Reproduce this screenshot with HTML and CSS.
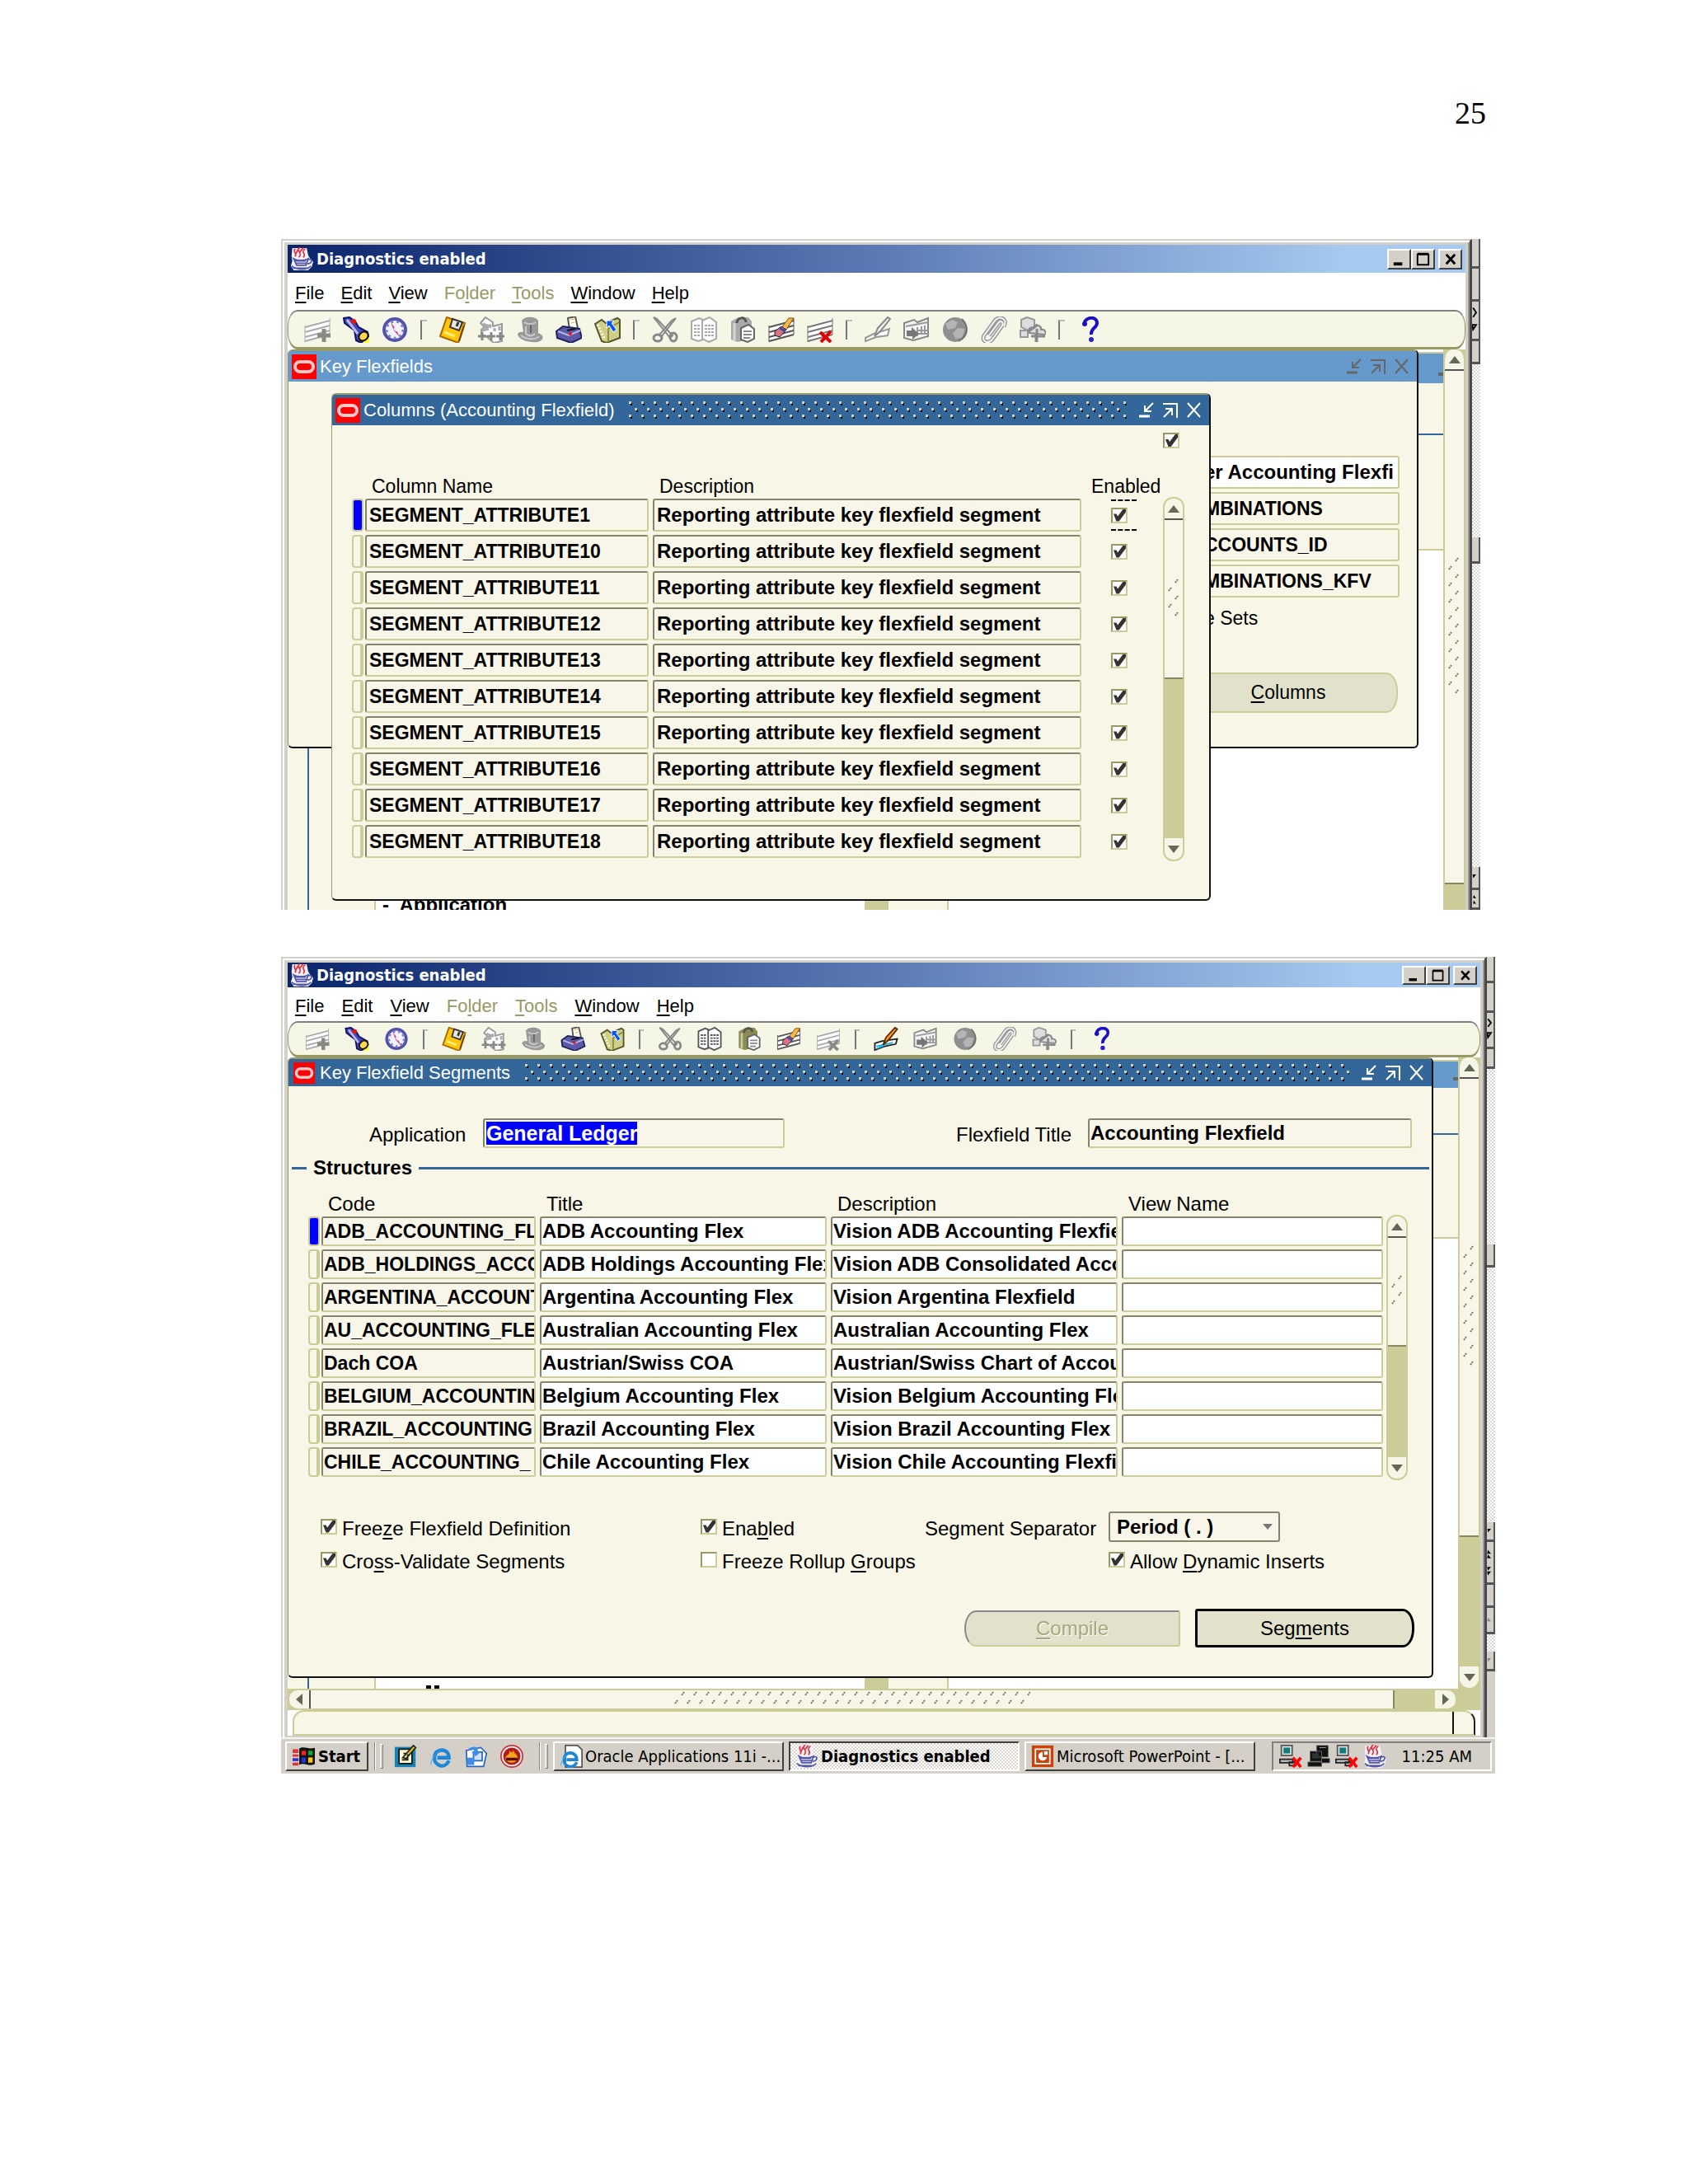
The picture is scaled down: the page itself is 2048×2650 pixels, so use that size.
FILE: index.html
```html
<!DOCTYPE html>
<html lang="en">
<head>
<meta charset="utf-8">
<title>Key Flexfields</title>
<link rel="stylesheet" href="styles.css">
</head>
<body>
<svg class="defs" aria-hidden="true">
  <defs>
    <pattern id="hatch" width="15" height="16" patternUnits="userSpaceOnUse">
      <path d="M3 2h2v3h-2zM10 10h2v3h-2z" fill="#000"/>
      <path d="M1 0h3v3h-3zM8 8h3v3h-3z" fill="#d2d2b4"/>
    </pattern>
    <pattern id="grip" width="15" height="20" patternUnits="userSpaceOnUse">
      <path d="M9 5l3-4M1 15l3-4" stroke="#77775a" stroke-width="2" stroke-dasharray="2 1"/>
    </pattern>
    <symbol id="rows" viewBox="0 0 32 32"><path d="M1 12l30-10v18L1 30z" fill="#fff"/><path d="M1 13l30-8M1 19l30-8M1 25l30-8M1 30l30-8" stroke="currentColor" stroke-width="2"/><path d="M1 11v20M31 2v20" stroke="currentColor"/></symbol>
    <symbol id="i-add" viewBox="0 0 32 32"><use href="#rows"/><path d="M24 15v16M16 23h16" stroke="#8a8a84" stroke-width="5"/></symbol>
    <symbol id="i-torch" viewBox="0 0 32 32"><path d="M22 32l10-12v12z" fill="#ff3"/><path d="M1 2l7-1 7 5 4 7 11 6 1 5-9 8-6-3-2-12L2 8z" fill="#4747b5" stroke="#116" stroke-width="2"/><path d="M5 4l13 17" stroke="#b9b9f2" stroke-width="3"/><circle cx="13" cy="6" r="3" fill="#e11"/><ellipse cx="25" cy="24" rx="6" ry="5" transform="rotate(-40 25 24)" fill="#ffd750" stroke="#111" stroke-width="2"/></symbol>
    <symbol id="i-compass" viewBox="0 0 32 32"><circle cx="16" cy="16" r="13" fill="#f2f2ff" stroke="#5252aa" stroke-width="4"/><circle cx="16" cy="16" r="10" fill="none" stroke="#8080c8" stroke-width="3" stroke-dasharray="3 4"/><path d="M11 7l6 8 5 10-7-8z" fill="#d12a6d"/><path d="M15 14l3 4" stroke="#fff" stroke-width="2"/></symbol>
    <symbol id="i-save" viewBox="0 0 32 32"><path d="M9 1l22 7-8 24L1 24z" fill="#ffc60a" stroke="#a46a00" stroke-width="2"/><path d="M16 3l12 4-4 10-11-4z" fill="#e8e8df" stroke="#333" stroke-width="2"/><path d="M23 7l-2 5" stroke="#333" stroke-width="3"/><path d="M24 30l6-19" stroke="#7a3b00" stroke-width="2"/><path d="M6 19l13 5" stroke="#fff07a" stroke-width="3"/></symbol>
    <symbol id="i-steps" viewBox="0 0 32 32"><path d="M9 1l9 6v5l11-3v21l-10 2-9-8-6-2v-6l4-3-5-5z" fill="#fff" stroke="#999" stroke-width="2"/><path d="M6 9l10 4M8 14l8-4M20 14v4M26 12v5M5 17l8-2" stroke="#aaa" stroke-width="3"/><path d="M0 24h10M11 24h10M22 24h10M5 19v10M16 19v10M27 19v10" stroke="#888" stroke-width="3"/></symbol>
    <symbol id="i-hat" viewBox="0 0 32 32"><path d="M6 5c3-5 16-6 20 0v15c8 3 7 9-1 11-9 1-22-2-24-9 0-3 4-4 7-3z" fill="#999"/><path d="M9 7c4 3 10 3 14 0M5 23c6 5 18 6 22 1M11 12v9c4 3 8 3 11 0" stroke="#c9c9c9" stroke-width="2" fill="none"/><path d="M17 10v10" stroke="#666" stroke-width="2"/></symbol>
    <symbol id="i-print" viewBox="0 0 32 32"><path d="M15 2l9-2 3 14-10 2z" fill="#fff" stroke="#555" stroke-width="2"/><path d="M1 18l8-6 20 3 3 11-13 6-17-6z" fill="#5a5aa8" stroke="#22225a" stroke-width="2"/><path d="M3 18l13 5 14-6" stroke="#b6b6e8" stroke-width="2" fill="none"/><path d="M14 17l10-2" stroke="#111" stroke-width="2"/><circle cx="18" cy="21" r="2" fill="#e11"/><path d="M18 4l5-1M19 8l4-1" stroke="#ea0"/></symbol>
    <symbol id="i-folder" viewBox="0 0 32 32"><path d="M1 9l8-5 5 4 14-6 3 2v22L15 32 9 30z" fill="#cfcf86" stroke="#55552a" stroke-width="2"/><path d="M17 31V15l13-8" fill="none" stroke="#8b8b45" stroke-width="2"/><path d="M4 10l9 18" stroke="#fffff0" stroke-width="3" stroke-dasharray="2 2"/><path d="M15 5h9l-3 3 6 8-4 3-5-8-3 3z" fill="#05f" stroke="#fff"/></symbol>
    <symbol id="i-cut" viewBox="0 0 32 32"><path d="M2 1l4 2 19 20-3 3zM29 2l-5 3L9 22l2 3z" fill="#eee" stroke="#888" stroke-width="2"/><ellipse cx="26" cy="25" rx="4" ry="5" fill="none" stroke="#888" stroke-width="3"/><ellipse cx="7" cy="26" rx="5" ry="4" fill="none" stroke="#888" stroke-width="3"/></symbol>
    <symbol id="i-copy" viewBox="0 0 32 32"><path d="M1 6l9-4 8 3v22L9 30l-8-3z" fill="#fff" stroke="currentColor" stroke-width="2"/><path d="M14 5l9-4 8 6v20l-9 4-8-4z" fill="#fff" stroke="currentColor" stroke-width="2"/><path d="M17 11h11M17 15h11M17 19h11M17 23h11M4 11h7M4 15h7M4 19h7M4 23h7" stroke="currentColor" stroke-width="2" stroke-dasharray="3 1"/></symbol>
    <symbol id="i-paste" viewBox="0 0 32 32"><path d="M2 6l9-5h12l4 5v21L10 31l-8-3z" fill="currentColor"/><path d="M6 8v21" stroke="#fff" stroke-opacity=".5" stroke-width="3"/><path d="M9 8c0-7 11-9 11-1" fill="none" stroke="#555" stroke-width="3"/><path d="M14 14l9-4 7 5v12l-8 4-8-3z" fill="#fff" stroke="#666" stroke-width="2"/><path d="M17 18h10M17 22h10M17 26h8" stroke="#888" stroke-width="2"/></symbol>
    <symbol id="i-clear" viewBox="0 0 32 32"><use href="#rows"/><path d="M15 15L25 2h6l-9 14z" fill="#f2b84b" stroke="#854700"/><path d="M8 18l8-6 6 4-8 9-6-2z" fill="#d77383" stroke="#222"/><path d="M14 14l7 4" stroke="#44a" stroke-width="3"/></symbol>
    <symbol id="i-delete" viewBox="0 0 32 32"><use href="#rows" color="#777"/><path d="M16 19l13 12M29 18L17 31" stroke="#e00000" stroke-width="4"/></symbol>
    <symbol id="i-delete-off" viewBox="0 0 32 32"><use href="#rows" color="#aaa"/><path d="M16 19l13 12M29 18L17 31" stroke="#888" stroke-width="4"/></symbol>
    <symbol id="i-edit-off" viewBox="0 0 32 32"><path d="M1 26l10-5 19-6-2 8-14 2L1 30z" fill="#fff" stroke="#999" stroke-width="2"/><path d="M12 24l4-10L28 1l3 2-12 15z" fill="#eee" stroke="#888" stroke-width="2"/></symbol>
    <symbol id="i-edit" viewBox="0 0 32 32"><path d="M1 22l10-3 20-3-2 7-15 3L1 31z" fill="#fff" stroke="#222" stroke-width="2"/><path d="M3 26l22-5M4 29l9-4" stroke="#18aee0" stroke-width="2"/><path d="M12 24l4-10L28 1l3 2-12 15z" fill="#ff9a22" stroke="#5a2b00" stroke-width="2"/></symbol>
    <symbol id="i-trans" viewBox="0 0 32 32"><path d="M1 8l12-4 4 3 13-5v22l-18 5-11-3z" fill="#f4f4f4" stroke="#888" stroke-width="2"/><path d="M3 12l27-5M17 13v11M22 12v10M26 11v10M16 17h14M16 21h14" stroke="#999" stroke-width="2"/><path d="M4 17h6v-4l9 8-8 7v-4H4z" fill="#777"/></symbol>
    <symbol id="i-globe" viewBox="0 0 32 32"><circle cx="16" cy="16" r="15" fill="#8f8f8f"/><path d="M4 9l8-5 7 3-3 7-9 2zM19 14l9 1-4 11-8 1-3-7z" fill="#b4b4b4"/><path d="M24 3c8 8 8 20-4 27" stroke="#737373" stroke-width="2" fill="none"/></symbol>
    <symbol id="i-clip" viewBox="0 0 32 32"><path d="M10 23L21 8c3-4 7-1 5 3L14 28c-5 6-14 2-10-5L17 5c6-7 16-2 11 7" fill="none" stroke="#999" stroke-width="5"/><path d="M10 23L21 8c3-4 7-1 5 3L14 28c-5 6-14 2-10-5L17 5c6-7 16-2 11 7" fill="none" stroke="#f4f4f4" stroke-width="2"/></symbol>
    <symbol id="i-tree" viewBox="0 0 32 32"><path d="M2 4l7-3 9 3v9l-8 4-8-4zM1 17h9v8H1z" fill="#ddd" stroke="#999" stroke-width="2"/><path d="M12 20c-4-4 2-8 5-6 2-6 10-3 9 2 6-1 7 5 4 6l-9-1z" fill="#ddd" stroke="#888" stroke-width="2"/><path d="M11 18l11-8M21 15v16M14 24h17M20 20v11" stroke="#888" stroke-width="3"/></symbol>
    <symbol id="i-help" viewBox="0 0 32 32"><path d="M9 10C7 1 24-2 24 8c0 6-8 6-7 14" fill="none" stroke="#1b10c4" stroke-width="4"/><circle cx="9" cy="9" r="3" fill="#1b10c4"/><circle cx="17" cy="28" r="3" fill="#2a20d4"/></symbol>
    <symbol id="java" viewBox="0 0 32 32"><path d="M3 1h20l2 10 3 5 4 4-2 7-5 5H5l-4-6 2-7-1-7z" fill="#f2f2fb"/><path d="M14 0c-8 6 5 6-2 14M21 2c-8 5 3 7-3 12M7 2c-4 4 3 6 0 11M11 3l-4 8M18 1l-5 6" fill="none" stroke="#e3323e" stroke-width="2"/><path d="M5 16c5 3 14 3 20 0l-3 9H9zM25 17c7-2 6 5-1 6M2 26c8 6 21 6 27 0M6 19h16M8 22h14M4 29h22" fill="none" stroke="#5257a8" stroke-width="2"/></symbol>
    <symbol id="oracle" viewBox="0 0 30 30"><path d="M0 0h30v30H0z" fill="#f00"/><rect x="4" y="9" width="22" height="12" rx="6" fill="none" stroke="#ffc9c9" stroke-width="4"/></symbol>
    <symbol id="w-min" viewBox="0 0 20 20"><path d="M1 17h13" stroke="currentColor" stroke-width="3"/><path d="M18 1l-9 9M8 4v7h8" fill="none" stroke="currentColor" stroke-width="2"/></symbol>
    <symbol id="w-max" viewBox="0 0 20 20"><path d="M1 2h17v17" fill="none" stroke="currentColor" stroke-width="2"/><path d="M2 18l9-9M4 8h8v8" fill="none" stroke="currentColor" stroke-width="2"/></symbol>
    <symbol id="w-close" viewBox="0 0 20 20"><path d="M2 1l15 17M17 1L2 18" stroke="currentColor" stroke-width="2"/></symbol>
    <symbol id="netpc" viewBox="0 0 32 32"><path d="M3 1h15v14H3z" fill="#ddd" stroke="#555" stroke-width="2"/><path d="M6 4h9v8H6z" fill="#087f7c"/><path d="M1 20h18v5H1zM14 24h9v5h-9z" fill="#bbb" stroke="#222" stroke-width="2"/></symbol>
    <symbol id="netoff" viewBox="0 0 32 32"><use href="#netpc"/><path d="M19 18l11 13M30 18L19 31" stroke="#f00" stroke-width="4"/></symbol>
    <symbol id="netdark" viewBox="0 0 32 32"><path d="M13 1h16v16H13zM4 9h16v14H4zM1 24h19v6H1zM20 19h11v6H20z" fill="#111" stroke="#666"/><path d="M7 12h9v7H7z" fill="#333"/><path d="M17 4h9" stroke="#aaa"/></symbol>
    <symbol id="ie" viewBox="0 0 32 32"><path d="M27 22c-5 12-21 8-20-5C8 4 27 4 27 18H11" fill="none" stroke="#1c86d8" stroke-width="5"/><path d="M2 29C-2 20 18 1 30 3c-9-1-21 8-26 18z" fill="#4fb6f2"/></symbol>
  </defs>
</svg>

<main class="page">
  <p class="page-number">25</p>

  <section class="shot shot-one">
    <div class="frame">
      <header class="app-title">
        <svg class="java"><use href="#java"/></svg><span>Diagnostics enabled</span>
        <button aria-label="Minimize"><svg viewBox="0 0 24 22"><path d="M5 17h11" stroke="#000" stroke-width="4"/></svg></button><button aria-label="Maximize"><svg viewBox="0 0 24 22"><path d="M5 5h14v13H5zM5 4h14" fill="none" stroke="#000" stroke-width="2"/></svg></button><button class="apart" aria-label="Close"><svg viewBox="0 0 24 22"><path d="M7 5l11 12M18 5L7 17" stroke="#000" stroke-width="3"/></svg></button>
      </header>
      <nav class="menu">
        <a href="#"><u>F</u>ile</a><a href="#"><u>E</u>dit</a><a href="#"><u>V</u>iew</a><a href="#" class="off">Fo<u>l</u>der</a><a href="#" class="off"><u>T</u>ools</a><a href="#"><u>W</u>indow</a><a href="#"><u>H</u>elp</a>
      </nav>
      <div class="toolbar">
        <svg class="faint"><use href="#i-add"/></svg><svg><use href="#i-torch"/></svg><svg><use href="#i-compass"/></svg><i></i>
        <svg><use href="#i-save"/></svg><svg><use href="#i-steps"/></svg><svg><use href="#i-hat"/></svg><svg><use href="#i-print"/></svg><svg><use href="#i-folder"/></svg><i></i>
        <svg><use href="#i-cut"/></svg><svg class="faint"><use href="#i-copy"/></svg><svg class="faint"><use href="#i-paste"/></svg><svg class="dark"><use href="#i-clear"/></svg><svg><use href="#i-delete"/></svg><i></i>
        <svg><use href="#i-edit-off"/></svg><svg><use href="#i-trans"/></svg><svg><use href="#i-globe"/></svg><svg><use href="#i-clip"/></svg><svg><use href="#i-tree"/></svg><i></i>
        <svg><use href="#i-help"/></svg>
      </div>
      <div class="workspace">
        <div class="desktop">
          <div class="behind">
            <div class="behind-title"><i></i></div>
            <div class="behind-form"></div>
            <div class="behind-list"><div class="tree-edge"></div><div class="tree"><b>-&nbsp; Application</b></div><div class="tree-scroll"></div><div class="tree-gap"></div></div>
          </div>
          <section class="window key-window">
            <header class="bar idle"><svg class="logo"><use href="#oracle"/></svg><h2>Key Flexfields</h2><span class="controls"><svg><use href="#w-min"/></svg><svg><use href="#w-max"/></svg><svg><use href="#w-close"/></svg></span></header>
            <div class="key-form">
              <input class="field editable" aria-label="Title" value="er Accounting Flexfi">
              <input class="field caps" aria-label="Table" value="MBINATIONS" readonly>
              <input class="field caps" aria-label="Identifier" value="CCOUNTS_ID" readonly>
              <input class="field caps" aria-label="View" value="MBINATIONS_KFV" readonly>
              <span class="sets">e Sets</span>
              <button class="push"><span><u>C</u>olumns</span></button>
            </div>
          </section>
          <section class="window columns-window">
            <header class="bar"><svg class="logo"><use href="#oracle"/></svg><h2>Columns (Accounting Flexfield)</h2><svg class="hatch"><rect width="100%" height="100%" fill="url(#hatch)"/></svg><span class="controls"><svg><use href="#w-min"/></svg><svg><use href="#w-max"/></svg><svg><use href="#w-close"/></svg></span></header>
            <div class="folder-check"><input type="checkbox" aria-label="Folder" checked></div>
            <div class="block">
              <table class="grid grid-columns">
                <colgroup><col class="c-mark"><col class="c-name"><col class="c-desc"><col></colgroup>
                <thead><tr><th></th><th>Column Name</th><th>Description</th><th class="th-enabled">Enabled</th></tr></thead>
                <tbody>
                  <tr class="current"><td><i></i></td><td><input class="field caps" aria-label="Column Name" value="SEGMENT_ATTRIBUTE1" readonly></td><td><input class="field" aria-label="Description" value="Reporting attribute key flexfield segment" readonly></td><td class="tick"><span class="focus"><input type="checkbox" aria-label="Enabled" checked></span></td></tr>
                  <tr><td><i></i></td><td><input class="field caps" aria-label="Column Name" value="SEGMENT_ATTRIBUTE10" readonly></td><td><input class="field" aria-label="Description" value="Reporting attribute key flexfield segment" readonly></td><td class="tick"><input type="checkbox" aria-label="Enabled" checked></td></tr>
                  <tr><td><i></i></td><td><input class="field caps" aria-label="Column Name" value="SEGMENT_ATTRIBUTE11" readonly></td><td><input class="field" aria-label="Description" value="Reporting attribute key flexfield segment" readonly></td><td class="tick"><input type="checkbox" aria-label="Enabled" checked></td></tr>
                  <tr><td><i></i></td><td><input class="field caps" aria-label="Column Name" value="SEGMENT_ATTRIBUTE12" readonly></td><td><input class="field" aria-label="Description" value="Reporting attribute key flexfield segment" readonly></td><td class="tick"><input type="checkbox" aria-label="Enabled" checked></td></tr>
                  <tr><td><i></i></td><td><input class="field caps" aria-label="Column Name" value="SEGMENT_ATTRIBUTE13" readonly></td><td><input class="field" aria-label="Description" value="Reporting attribute key flexfield segment" readonly></td><td class="tick"><input type="checkbox" aria-label="Enabled" checked></td></tr>
                  <tr><td><i></i></td><td><input class="field caps" aria-label="Column Name" value="SEGMENT_ATTRIBUTE14" readonly></td><td><input class="field" aria-label="Description" value="Reporting attribute key flexfield segment" readonly></td><td class="tick"><input type="checkbox" aria-label="Enabled" checked></td></tr>
                  <tr><td><i></i></td><td><input class="field caps" aria-label="Column Name" value="SEGMENT_ATTRIBUTE15" readonly></td><td><input class="field" aria-label="Description" value="Reporting attribute key flexfield segment" readonly></td><td class="tick"><input type="checkbox" aria-label="Enabled" checked></td></tr>
                  <tr><td><i></i></td><td><input class="field caps" aria-label="Column Name" value="SEGMENT_ATTRIBUTE16" readonly></td><td><input class="field" aria-label="Description" value="Reporting attribute key flexfield segment" readonly></td><td class="tick"><input type="checkbox" aria-label="Enabled" checked></td></tr>
                  <tr><td><i></i></td><td><input class="field caps" aria-label="Column Name" value="SEGMENT_ATTRIBUTE17" readonly></td><td><input class="field" aria-label="Description" value="Reporting attribute key flexfield segment" readonly></td><td class="tick"><input type="checkbox" aria-label="Enabled" checked></td></tr>
                  <tr><td><i></i></td><td><input class="field caps" aria-label="Column Name" value="SEGMENT_ATTRIBUTE18" readonly></td><td><input class="field" aria-label="Description" value="Reporting attribute key flexfield segment" readonly></td><td class="tick"><input type="checkbox" aria-label="Enabled" checked></td></tr>
                </tbody>
              </table>
              <div class="vscroll"><button class="up" aria-label="Up"></button><div class="thumb"><svg height="50"><rect width="100%" height="100%" fill="url(#grip)"/></svg></div><div class="track"></div><button class="down" aria-label="Down"></button></div>
            </div>
          </section>
        </div>
        <div class="vscroll outer"><button class="up" aria-label="Up"></button><div class="thumb"><svg height="170"><rect width="100%" height="100%" fill="url(#grip)"/></svg></div><div class="track"></div></div>
      </div>
    </div>
    <div class="edge">
      <i class="key h36"></i><i class="key h40"></i><i class="key h48"><svg viewBox="0 0 10 48"><path d="M1 8l4 6-4 6M0 30h5l-4 6z" fill="none" stroke="#000" stroke-width="2"/></svg></i><i class="key h28"></i><i class="dither"></i><i class="key h32"></i><i class="dither twice"></i><i class="key h28"><svg viewBox="0 0 10 28"><path d="M0 10h5l-4 5z"/></svg></i><i class="key h24"><svg viewBox="0 0 10 28"><path d="M0 13h5l-4-5zM0 22h5l-4-5z"/></svg></i>
    </div>
  </section>

  <section class="shot shot-two">
    <div class="frame">
      <header class="app-title">
        <svg class="java"><use href="#java"/></svg><span>Diagnostics enabled</span>
        <button aria-label="Minimize"><svg viewBox="0 0 24 22"><path d="M5 17h11" stroke="#000" stroke-width="4"/></svg></button><button aria-label="Maximize"><svg viewBox="0 0 24 22"><path d="M5 5h14v13H5zM5 4h14" fill="none" stroke="#000" stroke-width="2"/></svg></button><button class="apart" aria-label="Close"><svg viewBox="0 0 24 22"><path d="M7 5l11 12M18 5L7 17" stroke="#000" stroke-width="3"/></svg></button>
      </header>
      <nav class="menu">
        <a href="#"><u>F</u>ile</a><a href="#"><u>E</u>dit</a><a href="#"><u>V</u>iew</a><a href="#" class="off">Fo<u>l</u>der</a><a href="#" class="off"><u>T</u>ools</a><a href="#"><u>W</u>indow</a><a href="#"><u>H</u>elp</a>
      </nav>
      <div class="toolbar">
        <svg class="faint"><use href="#i-add"/></svg><svg><use href="#i-torch"/></svg><svg><use href="#i-compass"/></svg><i></i>
        <svg><use href="#i-save"/></svg><svg><use href="#i-steps"/></svg><svg><use href="#i-hat"/></svg><svg><use href="#i-print"/></svg><svg><use href="#i-folder"/></svg><i></i>
        <svg><use href="#i-cut"/></svg><svg class="dark"><use href="#i-copy"/></svg><svg class="olive"><use href="#i-paste"/></svg><svg class="dark"><use href="#i-clear"/></svg><svg><use href="#i-delete-off"/></svg><i></i>
        <svg><use href="#i-edit"/></svg><svg><use href="#i-trans"/></svg><svg><use href="#i-globe"/></svg><svg><use href="#i-clip"/></svg><svg><use href="#i-tree"/></svg><i></i>
        <svg><use href="#i-help"/></svg>
      </div>
      <div class="workspace">
        <div class="desktop">
          <div class="behind">
            <div class="behind-title"><i></i></div>
            <div class="behind-form"></div>
            <div class="behind-list"><div class="tree-edge"></div><div class="tree"><s></s><s></s></div><div class="tree-scroll"></div><div class="tree-gap"></div></div>
          </div>
          <section class="window segments-window">
            <header class="bar"><svg class="logo"><use href="#oracle"/></svg><h2>Key Flexfield Segments</h2><svg class="hatch"><rect width="100%" height="100%" fill="url(#hatch)"/></svg><span class="controls"><svg><use href="#w-min"/></svg><svg><use href="#w-max"/></svg><svg><use href="#w-close"/></svg></span></header>
            <div class="form-head">
              <label for="app">Application</label><div class="field app-field" id="app" tabindex="0"><mark>General Ledger</mark></div>
              <label for="ftitle">Flexfield Title</label><input class="field" id="ftitle" value="Accounting Flexfield" readonly>
            </div>
            <h3 class="group-title">Structures</h3>
            <div class="block">
              <table class="grid grid-structures">
                <colgroup><col class="c-mark"><col class="c-code"><col class="c-title"><col class="c-text"><col></colgroup>
                <thead><tr><th></th><th>Code</th><th>Title</th><th>Description</th><th>View Name</th></tr></thead>
                <tbody>
                  <tr class="current"><td><i></i></td><td><input class="field caps" aria-label="Code" value="ADB_ACCOUNTING_FLEX"></td><td><input class="field editable" aria-label="Title" value="ADB Accounting Flex"></td><td><input class="field editable" aria-label="Description" value="Vision ADB Accounting Flexfield"></td><td><input class="field editable" aria-label="View Name"></td></tr>
                  <tr><td><i></i></td><td><input class="field caps" aria-label="Code" value="ADB_HOLDINGS_ACCOUNTING"></td><td><input class="field editable" aria-label="Title" value="ADB Holdings Accounting Flex"></td><td><input class="field editable" aria-label="Description" value="Vision ADB Consolidated Accounting"></td><td><input class="field editable" aria-label="View Name"></td></tr>
                  <tr><td><i></i></td><td><input class="field caps" aria-label="Code" value="ARGENTINA_ACCOUNTING"></td><td><input class="field editable" aria-label="Title" value="Argentina Accounting Flex"></td><td><input class="field editable" aria-label="Description" value="Vision Argentina Flexfield"></td><td><input class="field editable" aria-label="View Name"></td></tr>
                  <tr><td><i></i></td><td><input class="field caps" aria-label="Code" value="AU_ACCOUNTING_FLEX"></td><td><input class="field editable" aria-label="Title" value="Australian Accounting Flex"></td><td><input class="field editable" aria-label="Description" value="Australian Accounting Flex"></td><td><input class="field editable" aria-label="View Name"></td></tr>
                  <tr><td><i></i></td><td><input class="field caps" aria-label="Code" value="Dach COA"></td><td><input class="field editable" aria-label="Title" value="Austrian/Swiss COA"></td><td><input class="field editable" aria-label="Description" value="Austrian/Swiss Chart of Accounts"></td><td><input class="field editable" aria-label="View Name"></td></tr>
                  <tr><td><i></i></td><td><input class="field caps" aria-label="Code" value="BELGIUM_ACCOUNTING"></td><td><input class="field editable" aria-label="Title" value="Belgium Accounting Flex"></td><td><input class="field editable" aria-label="Description" value="Vision Belgium Accounting Flex"></td><td><input class="field editable" aria-label="View Name"></td></tr>
                  <tr><td><i></i></td><td><input class="field caps" aria-label="Code" value="BRAZIL_ACCOUNTING"></td><td><input class="field editable" aria-label="Title" value="Brazil Accounting Flex"></td><td><input class="field editable" aria-label="Description" value="Vision Brazil Accounting Flex"></td><td><input class="field editable" aria-label="View Name"></td></tr>
                  <tr><td><i></i></td><td><input class="field caps" aria-label="Code" value="CHILE_ACCOUNTING_"></td><td><input class="field editable" aria-label="Title" value="Chile Accounting Flex"></td><td><input class="field editable" aria-label="Description" value="Vision Chile Accounting Flexfield"></td><td><input class="field editable" aria-label="View Name"></td></tr>
                </tbody>
              </table>
              <div class="vscroll"><button class="up" aria-label="Up"></button><div class="thumb"><svg height="40"><rect width="100%" height="100%" fill="url(#grip)"/></svg></div><div class="track"></div><button class="down" aria-label="Down"></button></div>
            </div>
            <div class="options">
              <label><input type="checkbox" checked><span>Free<u>z</u>e Flexfield Definition</span></label>
              <label><input type="checkbox" checked><span>Ena<u>b</u>led</span></label>
              <label for="sep"><span>Segment Separator</span></label>
              <div class="select"><select id="sep"><option>Period ( . )</option></select></div>
              <label><input type="checkbox" checked><span>Cro<u>s</u>s-Validate Segments</span></label>
              <label class="two"><input type="checkbox"><span>Freeze Rollup <u>G</u>roups</span></label>
              <label><input type="checkbox" checked><span>Allow <u>D</u>ynamic Inserts</span></label>
            </div>
            <div class="actions">
              <button class="push compile" disabled><span><u>C</u>ompile</span></button>
              <button class="push default"><span>Seg<u>m</u>ents</span></button>
            </div>
          </section>
        </div>
        <div class="vscroll outer"><button class="up" aria-label="Up"></button><div class="thumb"><svg height="150"><rect width="100%" height="100%" fill="url(#grip)"/></svg></div><div class="track"></div><button class="down" aria-label="Down"></button></div>
      </div>
      <div class="hscroll"><button class="left" aria-label="Left"></button><div class="thumb"><svg width="432" height="20"><rect width="100%" height="100%" fill="url(#grip)"/></svg></div><div class="track"></div><button class="right" aria-label="Right"></button></div>
      <div class="status"><span></span></div>
    </div>
    <div class="edge">
      <i class="key h32"></i><i class="key h36"></i><i class="key h44"><svg viewBox="0 0 10 44"><path d="M1 8l4 5-4 5M0 26h5l-4 6z" fill="none" stroke="#000" stroke-width="2"/></svg></i><i class="key h24"></i><i class="dither"></i><i class="key h28"></i><i class="dither more"></i><i class="key h24"><svg viewBox="0 0 10 24"><path d="M0 9h5l-4 5z"/></svg></i><i class="key h52"><svg viewBox="0 0 10 52"><path d="M0 15h5l-4-5zM0 21h5l-4-5zM0 32h5l-4 5zM0 38h5l-4 5z"/></svg></i><i class="key h28"></i><i class="key h32"><svg viewBox="0 0 10 32"><path d="M0 18h5l-4-5z" fill="#888"/></svg></i><i class="dither none"></i><i class="key h24"><svg viewBox="0 0 10 24"><path d="M0 9h5l-4 5z" fill="#888"/></svg></i><i class="plain"></i>
    </div>
    <footer class="taskbar">
      <button class="start"><svg viewBox="0 0 32 30"><path d="M1 5h8v5H1zM1 12h8v3H1zM1 23h8v4H1z" fill="#d33"/><path d="M1 17h8v4H1z" fill="#33c"/><path d="M10 4c7-4 12 2 21-1v22c-9 4-14-3-21 1z" fill="#111"/><path d="M13 7l6 0v6l-6 0z" fill="#e22"/><path d="M22 7h6v6h-6z" fill="#1a3"/><path d="M13 16h6v7h-6z" fill="#23d"/><path d="M22 16h6v7h-6z" fill="#fc0"/></svg><span>Start</span></button>
      <i class="rule"></i><i class="grip"></i>
      <div class="quick">
        <svg viewBox="0 0 32 32"><path d="M1 3h29v28H1z" fill="#1683b6"/><path d="M7 6h18v20H7z" fill="#fffcd8" stroke="#111" stroke-width="2"/><path d="M13 12h4M12 18l15-17 3 3-13 15zM11 21h8v-8" fill="#f5c518" stroke="#222" stroke-width="2"/></svg>
        <svg><use href="#ie"/></svg>
        <svg viewBox="0 0 32 32"><path d="M2 8l20-4 8 8-4 18H3z" fill="#fff" stroke="#2a67c4" stroke-width="2"/><path d="M12 10h12v12H12z" fill="#cfe2ff" stroke="#2a67c4" stroke-width="2"/><path d="M4 6c9-6 15-3 14 4h4l-7 6-6-6h4c0-4-4-4-9-4zM3 18h10v10H3z" fill="#3e8ee8"/></svg>
        <svg viewBox="0 0 32 32"><circle cx="16" cy="16" r="15" fill="#fff" stroke="#d2323a" stroke-width="2"/><circle cx="16" cy="16" r="12" fill="#b51a1a"/><path d="M7 20c0-7 6-4 6-12 3 4 4 3 5-1 1 6 7 6 6 13-4 7-13 6-17 0z" fill="#f7a51c"/><path d="M8 18h16v4H8z" fill="#5a0c0c"/></svg>
      </div>
      <i class="rule"></i><i class="grip"></i>
      <button class="task"><svg viewBox="0 0 32 32"><path d="M8 1h17l6 6v24H8z" fill="#fff" stroke="#555" stroke-width="2"/><svg x="0" y="5" width="24" height="22"><use href="#ie"/></svg></svg><span>Oracle Applications 11i -...</span></button>
      <button class="task pressed"><svg><use href="#java"/></svg><span>Diagnostics enabled</span></button>
      <button class="task"><svg viewBox="0 0 32 32"><path d="M1 1h30v30H1z" fill="#c9440c"/><path d="M6 6h20v20H6z" fill="none" stroke="#fff" stroke-width="2"/><path d="M16 10a6 6 0 1 0 6 7h-6z" fill="#fff"/><path d="M18 9h5v5h-5z" fill="#fff"/></svg><span>Microsoft PowerPoint - [...</span></button>
      <div class="tray"><svg><use href="#netoff"/></svg><svg><use href="#netdark"/></svg><svg><use href="#netoff"/></svg><svg><use href="#java"/></svg><time>11:25 AM</time></div>
    </footer>
  </section>
</main>
</body>
</html>
```

FILE: styles.css
```css
* { box-sizing: border-box; }
body { margin: 0; background: #fff; color: #000; font-family: "Liberation Sans", Arial, sans-serif; }
.defs { position: absolute; width: 0; height: 0; }
button, input, select { margin: 0; font-family: inherit; border-radius: 0; }
svg { display: block; flex: none; }
a { color: inherit; text-decoration: none; }
u { text-decoration-thickness: 2px; text-underline-offset: 3px; text-decoration-skip-ink: none; }
h2, h3, p { margin: 0; font-weight: normal; }

.page { min-height: 100vh; padding: 115px 234px 0 341px; }
.page-number { padding-right: 11px; text-align: right; font: 38px/44px "Liberation Serif", "Times New Roman", serif; }

/* Captured application frames */
.shot {
  --text: 23px; --title-h: 34px; --menu-h: 45px; --tool-h: 48px; --tool-gap: 15px; --sep: 8px; --icon-h: 32px;
  --bar-h: 38px; --logo-h: 30px; --row: 44px; --behind-form: 203px; --behind-line: 61px;
  display: grid; grid-template-columns: 1fr 10px; font-size: var(--text);
}
.shot-one { margin: 131px 18px 0 0; }
.shot-two {
  --text: 24px; --title-h: 30px; --menu-h: 41px; --tool-h: 44px; --tool-gap: 16px; --sep: 6px; --icon-h: 29px;
  --bar-h: 34px; --logo-h: 26px; --row: 40px; --behind-form: 183px; --behind-line: 55px;
  margin-top: 57px;
}
.frame {
  min-width: 0; padding: 5px 5px 0 6px; background: #d4d0c8;
  border: solid #d0d0cc; border-width: 2px 3px 0 2px; border-right-color: #484848;
  box-shadow: inset 2px 2px #fff, inset -2px 0 #999;
}
.app-title {
  display: flex; align-items: center; height: var(--title-h); padding: 0 4px 0 3px;
  background: linear-gradient(90deg, #0a246a, #5b7ab5 50%, #a6caf0 90%);
  color: #fff; font: bold 20px "DejaVu Sans Condensed", "DejaVu Sans", sans-serif;
}
.java { width: 28px; height: 28px; margin-right: 4px; }
.app-title span { flex: 1; }
.app-title button {
  width: 29px; height: 25px; padding: 0; background: #d4d0c8;
  border: 2px solid; border-color: #fff #404040 #404040 #fff;
}
.shot-two .app-title button { height: 23px; }
.app-title .apart { margin-left: 4px; }
.app-title button svg { width: 100%; height: 100%; }

.menu { display: flex; align-items: center; gap: 20px; height: var(--menu-h); padding: 4px 9px 0; background: #fff; font-size: 22px; }
.shot-two .menu { gap: 21px; }
.menu .off { color: #999966; }

.toolbar {
  display: flex; align-items: center; gap: var(--tool-gap); height: var(--tool-h); padding-left: 19px;
  background: #f6f6e6; border: solid #999966; border-width: 2px 1px 3px; border-top-color: #808080; border-left-color: #999;
  border-radius: 12px / 20px;
  box-shadow: 0 0 0 12px #fff; clip-path: inset(0);
}
.toolbar svg { width: 32px; height: var(--icon-h); }
.toolbar i { width: var(--sep); height: 24px; border: solid #777; border-width: 2px 0 0 2px; border-top-color: #bbb; }
.faint { color: #aaa; }
.dark { color: #555; }
.olive { color: #8c8c50; }

/* Forms desktop */
.workspace { display: flex; height: 680px; background: #cccc99; }
.shot-two .workspace { height: 766px; }
.desktop { position: relative; flex: 1; min-width: 0; overflow: hidden; background: #fff; }
.behind { display: flex; flex-direction: column; height: 100%; }
.behind-title {
  display: flex; justify-content: flex-end; align-items: flex-end; height: var(--bar-h); margin-top: 3px;
  padding-bottom: 9px; background: #6699cc; border-top: 2px solid #cccc99;
}
.behind-title i { width: 6px; height: 4px; background: #666; }
.behind-form {
  height: var(--behind-form); border-bottom: 2px solid #cccc99;
  background: linear-gradient(#336699, #336699) 0 var(--behind-line) / 100% 2px no-repeat #f8f6e6;
}
.behind-list { display: grid; grid-template-columns: 107px 593px 29px 73px 1fr; flex: 1; }
.tree-edge { border-right: 2px solid #cccc99; background: linear-gradient(#336699, #336699) 24px 0 / 2px 100% no-repeat #f8f6e6; }
.tree { display: flex; align-items: flex-end; gap: 4px; padding-left: 8px; overflow: hidden; }
.tree b { margin-bottom: -8px; font-size: 24px; line-height: 28px; }
.tree s { width: 6px; height: 4px; background: #000; }
.tree s:first-child { margin-left: 53px; }
.tree-scroll { background: #cccc99; }
.tree-gap { background: #f8f6e6; border-right: 2px solid #cccc99; }

.window {
  position: absolute; background: #f8f6e6; border: 1px solid #99996a; border-right: 2px solid #111; border-bottom: 2px solid #111;
  border-radius: 6px; overflow: hidden;
}
.key-window { inset: 0 30px auto 0; height: 484px; }
.columns-window { left: 53px; top: 53px; width: 1067px; height: 616px; }
.segments-window { inset: 0 30px auto 0; height: 753px; }
.bar {
  display: flex; align-items: center; height: var(--bar-h); padding: 0 8px 0 4px;
  background: #336699; color: #fff; border-top: 1px solid #99996a;
}
.bar.idle { background: #6699cc; }
.logo { width: 30px; height: var(--logo-h); margin-right: 4px; }
.bar h2 { font-size: 22px; }
.hatch { flex: 1; width: 0; height: 21px; margin: 0 14px 0 17px; }
.controls { display: flex; gap: 9px; margin-left: auto; }
.controls svg { width: 20px; height: 20px; }
.idle .controls { color: #666; }

.field {
  display: block; width: 100%; height: calc(var(--row) - 4px); padding: 0 0 0 3px;
  background: #f8f6e8; color: #000; border: 2px solid; border-color: #85856c #cccc99 #cccc99 #85856c;
  border-radius: 3px; font-size: 24px; font-weight: bold; outline: 0; overflow: hidden;
}
.field.editable { background: #fff; }
.field.caps { font-size: 23px; }

.key-form { display: flex; flex-direction: column; align-items: flex-end; gap: 4px; padding: 90px 21px 0 0; }
.key-form .field { width: 257px; padding-left: 18px; border-color: #cccc99; }
.sets { width: 237px; padding-top: 8px; }
.push {
  width: 266px; height: 49px; padding: 0; background: #e2e2cc; color: #000; font-size: var(--text);
  border: 2px solid #cccc99; border-radius: 3px 14px 14px 3px / 3px 22px 22px 3px;
}
.key-form .push { margin: 48px 2px 0 0; }

input[type="checkbox"] {
  appearance: none; display: block; flex: none; width: 20px; height: 19px; background: #fff;
  border: 2px solid; border-color: #999966 #cccc99 #cccc99 #999966;
}
input[type="checkbox"]:checked::before {
  content: ""; display: block; width: 16px; height: 15px; background: #333;
  clip-path: polygon(6% 40%, 28% 40%, 38% 60%, 80% 0, 100% 0, 100% 25%, 48% 100%, 28% 100%);
}
.folder-check { display: flex; justify-content: flex-end; padding: 9px 36px 0 0; }

.block { display: flex; padding-left: 24px; }
.columns-window .block { margin-top: 33px; padding-right: 30px; }
.grid { flex: 1; width: 0; table-layout: fixed; border-spacing: 0; }
.grid th { height: 28px; padding: 0 0 0 8px; text-align: left; vertical-align: top; font-weight: normal; line-height: 26px; }
.grid .th-enabled { padding-left: 7px; }
.grid td { height: var(--row); padding: 0 5px 4px 0; }
.c-mark { width: 16px; }
.c-name { width: 349px; }
.c-desc { width: 525px; }
.c-code { width: 265px; }
.c-title, .c-text { width: 353px; }
.grid i { display: block; width: 14px; height: calc(var(--row) - 4px); border: 2px solid #cccc99; border-right-width: 4px; border-radius: 4px; background: #f8f6e6; }
.grid td:first-child { padding-right: 0; }
.grid .current i { background: #00f; border-right-width: 2px; }
.grid .tick { padding-left: 31px; }
.focus { display: flex; align-items: center; width: 31px; height: 38px; border: dashed #000; border-width: 2px 0; }
.grid-structures .field { padding-left: 1px; }

.vscroll { display: flex; flex-direction: column; width: 26px; margin-top: 26px; background: #cccc99; border: 2px solid #cccc99; border-radius: 12px; overflow: hidden; }
.vscroll button, .hscroll button { flex: none; height: 26px; padding: 0; border: 0; background: #f6f6e8; display: grid; place-items: center; }
.vscroll .up { border-bottom: 2px solid #555; }
.vscroll button::before { content: ""; border: solid transparent; border-width: 0 7px 9px; border-bottom-color: #666655; }
.vscroll .down::before { border-width: 9px 7px 0; border-top-color: #666655; }
.thumb { display: grid; place-items: center; background: #f8f6e8; }
.thumb svg { width: 15px; }
.vscroll .thumb { flex: 1; border-bottom: 2px solid #888860; }
.vscroll .track { height: 193px; }
.segments-window .vscroll .track { height: 134px; }
.vscroll.outer { width: 27px; margin: 0; border-width: 0 2px; border-radius: 12px 12px 0 0; }
.vscroll.outer .track { height: 31px; }
.shot-two .vscroll.outer .track { height: 157px; }
.shot-two .vscroll.outer .down { border-radius: 0 0 12px 12px; margin-bottom: 1px; }

.form-head { display: flex; align-items: center; padding: 39px 24px 0 98px; }
.form-head label { width: 138px; padding-top: 4px; }
.form-head label:nth-of-type(2) { width: 160px; margin-left: 208px; }
.app-field { flex: none; width: 366px; padding: 2px 0 0 2px; }
.form-head mark { display: inline-block; background: #00f; color: #fff; font-size: 25px; line-height: 28px; }
.form-head input { flex: 1; width: 0; padding-left: 1px; }
.group-title { display: flex; align-items: center; gap: 8px; margin: 11px 3px 0 4px; font-weight: bold; font-size: 24px; line-height: 26px; }
.group-title::before, .group-title::after { content: ""; height: 3px; background: #336699; }
.group-title::before { width: 18px; }
.group-title::after { flex: 1; }
.segments-window .block { margin-top: 18px; padding: 0 29px 0 24px; }
.segments-window .grid td:last-child { padding-right: 4px; }

.options { display: grid; grid-template-columns: 461px 272px 223px 1fr; grid-auto-rows: 40px; align-items: center; margin-top: 36px; padding-left: 39px; }
.options label { display: flex; align-items: center; gap: 6px; }
.options label span { padding-top: 5px; }
.options .two { grid-column: 2 / 4; }
.select { position: relative; width: 208px; }
.select::after { content: ""; position: absolute; right: 9px; top: 15px; border: solid transparent; border-width: 7px 6px 0; border-top-color: #777; }
.select select { appearance: none; width: 100%; height: 37px; padding: 0 0 0 8px; background: #f8f6e8; color: #000; border: 2px solid #85856c; border-radius: 3px; font-size: 24px; font-weight: bold; }
.actions { display: flex; justify-content: flex-end; align-items: center; gap: 18px; margin-top: 40px; padding-right: 21px; }
.actions .push { height: 44px; }
.actions .compile { width: 262px; color: #a8a87c; text-shadow: 1px 1px #fff; border-color: #888 #cccc99 #cccc99 #888; border-radius: 14px 3px 3px 14px / 22px 3px 3px 22px; }
.actions .default { height: 47px; color: #000; border: 3px solid #000; }

.hscroll { display: flex; height: 26px; padding: 2px 30px 2px 2px; background: #cccc99; }
.hscroll .left { width: 26px; height: auto; border-right: 2px solid #555; border-radius: 10px 0 0 10px; }
.hscroll .right { width: 25px; height: auto; border-radius: 0 10px 10px 0; }
.hscroll button::before { content: ""; border: solid transparent; border-width: 7px 8px 7px 0; border-right-color: #666655; }
.hscroll .right::before { border-width: 7px 0 7px 8px; border-left-color: #666655; }
.hscroll .thumb { flex: 1; border-right: 2px solid #888860; }
.hscroll .thumb svg { width: 432px; }
.hscroll .track { width: 49px; }
.status { height: 33px; padding: 0 6px; background: #fff; border-bottom: 2px solid #d4d0c8; }
.status span { display: block; height: 31px; background: linear-gradient(#111, #111) right 24px top 0 / 2px 100% no-repeat #f8f6e6; border: 2px solid #cccc99; border-right-color: #222; border-radius: 14px 14px 0 0; }

/* Slice of the neighbouring window */
.edge { display: flex; flex-direction: column; overflow: hidden; }
.edge i { flex: none; }
.edge svg { width: 10px; height: 100%; }
.key { background: #d4d0c8; border: solid #555; border-width: 0 2px 3px 0; }
.edge .dither { flex: 211 0 0; background: repeating-conic-gradient(#d8d8d4 0 25%, #fff 0 50%) 0 0 / 4px 4px; }
.edge .twice { flex-grow: 370; }
.edge .more { flex-grow: 306; }
.edge .none { flex-grow: 21; }
.edge .plain { height: 80px; background: #d4d0c8; }
.h24 { height: 24px; } .h28 { height: 28px; } .h32 { height: 32px; } .h36 { height: 36px; }
.h40 { height: 40px; } .h44 { height: 44px; } .h48 { height: 48px; } .h52 { height: 52px; }

.taskbar {
  grid-column: 1 / 3; display: flex; align-items: center; height: 44px; padding: 0 4px 0 5px;
  background: #d4d0c8; border-top: 2px solid #f4f4f0; font: 20px "DejaVu Sans Condensed", "DejaVu Sans", sans-serif;
}
.taskbar button { display: flex; flex: none; align-items: center; height: 36px; padding: 0 0 0 6px; background: #d4d0c8; border: 2px solid; border-color: #fff #404040 #404040 #fff; color: #000; font: inherit; white-space: nowrap; }
.taskbar .start { width: 101px; gap: 3px; font-weight: bold; }
.taskbar i { flex: none; }
.start svg { width: 29px; height: 27px; }
.rule { width: 2px; height: 34px; margin-left: 7px; background: #888; border-right: 1px solid #fff; }
.grip { width: 4px; height: 30px; margin-left: 5px; border: 1px solid; border-color: #fff #808080 #808080 #fff; }
.quick { display: flex; flex: none; gap: 13px; width: 170px; margin-left: 12px; }
.quick svg { width: 30px; height: 28px; }
.taskbar .task { width: 280px; gap: 3px; margin-right: 6px; overflow: hidden; }
.taskbar .grip + .task { margin-left: 6px; }
.task svg { width: 28px; height: 28px; }
.taskbar .pressed { font-weight: bold; border-color: #404040 #fff #fff #404040; background: repeating-conic-gradient(#d8d4cc 0 25%, #fff 0 50%) 0 0 / 4px 4px; }
.tray { display: flex; align-items: center; gap: 4px; flex: 1; height: 36px; margin-left: 14px; padding-left: 6px; border: 2px solid; border-color: #808080 #fff #fff #808080; }
.tray svg { width: 30px; height: 28px; }
.tray time { margin: 0 22px 0 auto; white-space: nowrap; }
```
